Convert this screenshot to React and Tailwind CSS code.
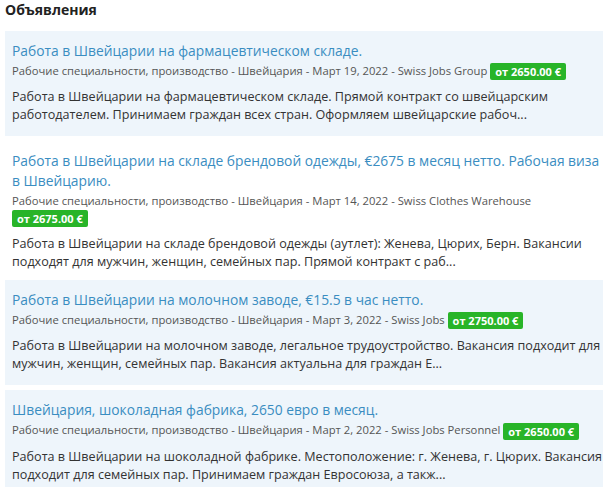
import React from 'react';

const ads = [
    {
        title: "Работа в Швейцарии на фармацевтическом складе.",
        date: "Март 19, 2022",
        company: "Swiss Jobs Group",
        price: "от 2650.00 €",
        text: "Работа в Швейцарии на фармацевтическом складе. Прямой контракт со швейцарским работодателем. Принимаем граждан всех стран. Оформляем швейцарские рабоч...",
    },
    {
        title: "Работа в Швейцарии на складе брендовой одежды, €2675 в месяц нетто. Рабочая виза в Швейцарию.",
        date: "Март 14, 2022",
        company: "Swiss Clothes Warehouse",
        price: "от 2675.00 €",
        text: "Работа в Швейцарии на складе брендовой одежды (аутлет): Женева, Цюрих, Берн. Вакансии подходят для мужчин, женщин, семейных пар. Прямой контракт с раб...",
    },
    {
        title: "Работа в Швейцарии на молочном заводе, €15.5 в час нетто.",
        date: "Март 3, 2022",
        company: "Swiss Jobs",
        price: "от 2750.00 €",
        text: "Работа в Швейцарии на молочном заводе, легальное трудоустройство. Вакансия подходит для мужчин, женщин, семейных пар. Вакансия актуальна для граждан Е...",
    },
    {
        title: "Швейцария, шоколадная фабрика, 2650 евро в месяц.",
        date: "Март 2, 2022",
        company: "Swiss Jobs Personnel",
        price: "от 2650.00 €",
        text: "Работа в Швейцарии на шоколадной фабрике. Местоположение: г. Женева, г. Цюрих. Вакансия подходит для семейных пар. Принимаем граждан Евросоюза, а такж...",
    },
];

const AdCard = ({ ad, shaded }) => {
    return (
        <div className={`pl-[7px] pr-0 pt-[10px] ${shaded ? 'bg-[#eef5fb] pb-[12px]' : 'bg-white pb-[4px]'}`}>
            <a href="#" className="block -mr-[6px] text-[13.8px] leading-[20px] text-[#3a8dc1]">{ad.title}</a>
            <div className="mt-[2px] text-[11.25px] leading-[16px] text-[#555]">
                Рабочие специальности, производство - Швейцария - {ad.date} - {ad.company}{' '}
                <span className="inline-block align-middle px-[5px] h-[17px] leading-[17px] rounded-[2px] bg-[#28b428] text-white font-bold text-[11px]">{ad.price}</span>
            </div>
            <p className="mt-[8px] -mr-[6px] text-[12.6px] leading-[18px] text-[#333]">{ad.text}</p>
        </div>
    );
};

const App = () => {
    return (
        <div className="w-[608px] h-[487px] overflow-hidden bg-white pl-[5px] pr-[5px] font-['Open_Sans',sans-serif]">
            <h2 className="text-[14px] leading-[20px] font-bold text-[#222]">Объявления</h2>
            <div className="mt-[11px] flex flex-col gap-[5px]">
                {ads.map((ad, i) => (
                    <AdCard key={i} ad={ad} shaded={i !== 1} />
                ))}
            </div>
        </div>
    );
};

export default App;
